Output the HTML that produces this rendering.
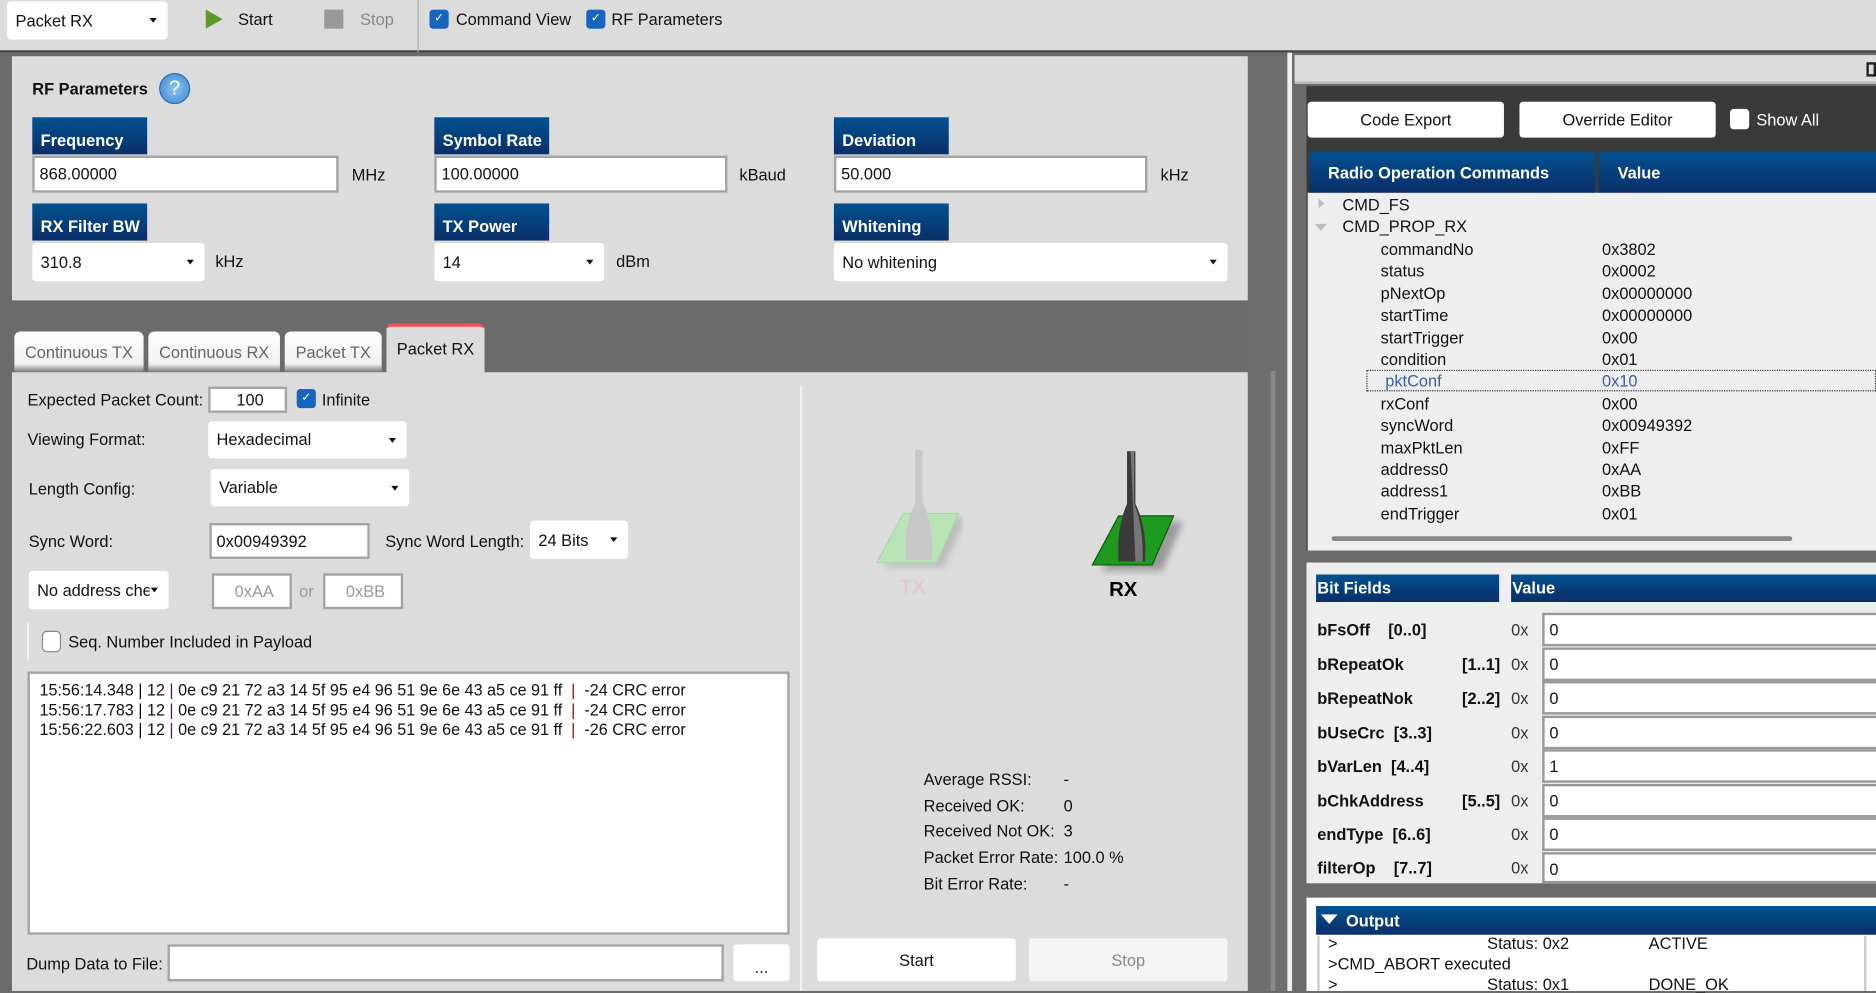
<!DOCTYPE html>
<html><head><meta charset="utf-8"><style>
*{box-sizing:border-box;margin:0;padding:0}
html,body{width:1876px;height:991px;overflow:hidden;background:#6b6b6b}
#w{position:absolute;left:0;top:0;width:1568px;height:828px;transform:scale(1.19643,1.19686);transform-origin:0 0;font-family:"Liberation Sans",sans-serif;font-size:13.7px;color:#111}
.a{position:absolute}
.bh{position:absolute;background:linear-gradient(#00518f,#0b2f68);color:#fff;font-weight:bold;font-size:13.7px;padding-left:7px;display:flex;align-items:center}
.inp{position:absolute;background:#fff;border:2px solid #a3a3a3;padding-left:4px;display:flex;align-items:center}
.dd{position:absolute;background:#fff;border-radius:3px;padding-left:7px;display:flex;align-items:center}
.dd:after{content:"";position:absolute;right:9px;top:50%;margin-top:-2px;border:3px solid transparent;border-top:4px solid #111}
.cb{position:absolute;width:16px;height:16px;border-radius:3px;background:#1565c0;color:#fff;font-size:10px;text-align:center;line-height:16px}
.cbe{position:absolute;width:16px;height:18px;border-radius:4px;background:#fff;border:1px solid #888}
.btn{position:absolute;background:#fff;border-radius:3px;display:flex;align-items:center;justify-content:center}
.tab{position:absolute;top:277px;height:34px;background:linear-gradient(#fff,#f0f0f0 80%,#777);border-radius:5px 5px 0 0;color:#666;display:flex;align-items:center;justify-content:center}
.row{position:absolute;left:1154px}
.val{position:absolute;left:1339px}
.bf{position:absolute;left:1101px;font-weight:bold}
.bx{position:absolute;left:1263px;color:#333}
.bi{position:absolute;left:1289px;width:290px;height:28px;background:#fff;border:2px solid #999;border-right:none;padding-left:4px;line-height:25px}
</style></head><body><div id="w">
<div class="a" style="left:0;top:0;width:1568px;height:44px;background:#dcdcdc;border-bottom:2px solid #444"></div>
<div class="dd" style="left:6px;top:1px;width:134px;height:32px">Packet RX</div>
<svg class="a" style="left:171px;top:7px" width="16" height="18"><polygon points="1,1 15,9 1,17" fill="#5a9a2a"/></svg>
<div class="a" style="left:199px;top:9px">Start</div>
<div class="a" style="left:271px;top:8px;width:16px;height:16px;background:#999"></div>
<div class="a" style="left:301px;top:9px;color:#888">Stop</div>
<div class="a" style="left:349px;top:0;width:1px;height:44px;background:#aaa"></div>
<div class="cb" style="left:359px;top:8px">✓</div><div class="a" style="left:381px;top:9px">Command View</div>
<div class="cb" style="left:490px;top:8px">✓</div><div class="a" style="left:511px;top:9px">RF Parameters</div>
<div class="a" style="left:10px;top:47px;width:1033px;height:204px;background:#dcdcdc"></div>
<div class="a" style="left:27px;top:67px;font-weight:bold">RF Parameters</div>
<div class="a" style="left:133px;top:61px;width:26px;height:26px;border-radius:50%;background:radial-gradient(#8ec4f0,#3a87d2);border:1px solid #2a6cb0;color:#fff;text-align:center;line-height:24px;font-size:17px">?</div>
<div class="bh" style="left:27px;top:98px;width:96px;height:31px;padding-top:8px">Frequency</div>
<div class="inp" style="left:27px;top:130px;width:256px;height:31px">868.00000</div>
<div class="a" style="left:294px;top:139px">MHz</div>
<div class="bh" style="left:363px;top:98px;width:96px;height:31px;padding-top:8px">Symbol Rate</div>
<div class="inp" style="left:363px;top:130px;width:245px;height:31px">100.00000</div>
<div class="a" style="left:618px;top:139px">kBaud</div>
<div class="bh" style="left:697px;top:98px;width:96px;height:31px;padding-top:8px">Deviation</div>
<div class="inp" style="left:697px;top:130px;width:262px;height:31px">50.000</div>
<div class="a" style="left:970px;top:139px">kHz</div>
<div class="bh" style="left:27px;top:170px;width:96px;height:31px;padding-top:8px">RX Filter BW</div>
<div class="dd" style="left:27px;top:203px;width:144px;height:32px">310.8</div>
<div class="a" style="left:180px;top:211px">kHz</div>
<div class="bh" style="left:363px;top:170px;width:96px;height:31px;padding-top:8px">TX Power</div>
<div class="dd" style="left:363px;top:203px;width:142px;height:32px">14</div>
<div class="a" style="left:515px;top:211px">dBm</div>
<div class="bh" style="left:697px;top:170px;width:96px;height:31px;padding-top:8px">Whitening</div>
<div class="dd" style="left:697px;top:203px;width:329px;height:32px">No whitening</div>
<div class="tab" style="left:12px;width:108px">Continuous TX</div>
<div class="tab" style="left:124px;width:110px">Continuous RX</div>
<div class="tab" style="left:238px;width:81px">Packet TX</div>
<div class="a" style="left:323px;top:270px;width:82px;height:42px;background:#dcdcdc;border-top:3px solid #f05050;border-radius:5px 5px 0 0;text-align:center;padding-top:11px">Packet RX</div>
<div class="a" style="left:10px;top:311px;width:1033px;height:517px;background:#dcdcdc"></div>
<div class="a" style="left:669px;top:322px;width:1px;height:506px;background:#fff"></div>
<div class="a" style="left:23px;top:327px">Expected Packet Count:</div>
<div class="inp" style="left:174px;top:323px;width:66px;height:22px;justify-content:center">100</div>
<div class="cb" style="left:248px;top:325px">✓</div><div class="a" style="left:269px;top:327px">Infinite</div>
<div class="a" style="left:23px;top:360px">Viewing Format:</div>
<div class="dd" style="left:174px;top:352px;width:166px;height:31px">Hexadecimal</div>
<div class="a" style="left:24px;top:401px">Length Config:</div>
<div class="dd" style="left:176px;top:392px;width:166px;height:31px">Variable</div>
<div class="a" style="left:24px;top:445px">Sync Word:</div>
<div class="inp" style="left:175px;top:437px;width:134px;height:30px">0x00949392</div>
<div class="a" style="left:322px;top:445px">Sync Word Length:</div>
<div class="dd" style="left:443px;top:435px;width:82px;height:32px">24 Bits</div>
<div class="dd" style="left:24px;top:477px;width:117px;height:32px;white-space:nowrap;overflow:hidden"><span style="display:inline-block;width:94px;overflow:hidden">No address check</span></div>
<div class="inp" style="left:177px;top:479px;width:67px;height:30px;justify-content:center;color:#999">0xAA</div>
<div class="a" style="left:250px;top:487px;color:#999">or</div>
<div class="inp" style="left:270px;top:479px;width:67px;height:30px;justify-content:center;color:#999">0xBB</div>
<div class="a" style="left:23px;top:520px;width:1px;height:32px;background:#fff"></div>
<div class="cbe" style="left:35px;top:527px"></div>
<div class="a" style="left:57px;top:529px">Seq. Number Included in Payload</div>
<div class="a" style="left:23px;top:561px;width:637px;height:220px;background:#fff;border:2px solid #a3a3a3;padding:6px 0 0 8px;font-size:13.5px;line-height:16.5px;white-space:pre">15:56:14.348 | 12 <span style="color:#609">|</span> 0e c9 21 72 a3 14 5f 95 e4 96 51 9e 6e 43 a5 ce 91 ff  <span style="color:#a00">|</span>  -24 CRC error
15:56:17.783 | 12 <span style="color:#609">|</span> 0e c9 21 72 a3 14 5f 95 e4 96 51 9e 6e 43 a5 ce 91 ff  <span style="color:#a00">|</span>  -24 CRC error
15:56:22.603 | 12 <span style="color:#609">|</span> 0e c9 21 72 a3 14 5f 95 e4 96 51 9e 6e 43 a5 ce 91 ff  <span style="color:#a00">|</span>  -26 CRC error</div>
<div class="a" style="left:22px;top:798px">Dump Data to File:</div>
<div class="inp" style="left:140px;top:789px;width:465px;height:31px"></div>
<div class="btn" style="left:613px;top:789px;width:47px;height:31px;padding-top:8px">...</div>
<svg class="a" style="left:725px;top:372px" width="80" height="125">
<defs><filter id="s"><feGaussianBlur stdDeviation="3"/></filter></defs>
<polygon points="30,57 76,57 58,98 8,98" fill="#bdbdbd" filter="url(#s)" transform="translate(6,4)"/>
<polygon points="30,57 76,57 58,98 8,98" fill="#b8e4b8" stroke="#a8d8a8"/>
<path d="M40,4 h6 v44 q10,20 8,48 h-22 q-2,-28 8,-48z" fill="#c8c8c8"/>
<text x="27" y="124" font-family="Liberation Sans" font-weight="bold" font-size="17" fill="#e0cccc">TX</text></svg>
<svg class="a" style="left:905px;top:374px" width="90" height="130">
<polygon points="30,57 76,57 58,98 8,98" fill="#9a9a9a" filter="url(#s)" transform="translate(8,5)"/>
<polygon points="30,57 76,57 58,98 8,98" fill="#1e9a1e" stroke="#0b5a0b"/>
<path d="M37,3 h7 v44 q10,20 8,48 h-22 q-2,-28 7,-48z" fill="#3a3a3a"/>
<path d="M40,3 h3 v44 q8,20 7,48 h-6z" fill="#777"/>
<text x="22" y="124" font-family="Liberation Sans" font-weight="bold" font-size="17" fill="#000">RX</text></svg>
<div class="a" style="left:772px;top:641px;line-height:21.7px">Average RSSI:<br>Received OK:<br>Received Not OK:<br>Packet Error Rate:<br>Bit Error Rate:</div>
<div class="a" style="left:889px;top:641px;line-height:21.7px">-<br>0<br>3<br>100.0 %<br>-</div>
<div class="btn" style="left:683px;top:784px;width:166px;height:36px">Start</div>
<div class="btn" style="left:860px;top:784px;width:166px;height:36px;background:#f4f4f4;color:#888">Stop</div>
<div class="a" style="left:1043px;top:47px;width:35px;height:781px;background:#6e6e6e"></div>
<div class="a" style="left:1062px;top:310px;width:4px;height:518px;background:#888"></div>
<div class="a" style="left:1076px;top:44px;width:4px;height:784px;background:#f0f0f0"></div>
<div class="a" style="left:1080px;top:44px;width:488px;height:784px;background:#6b6b6b"></div>
<div class="a" style="left:1082px;top:46px;width:486px;height:24px;background:#dcdcdc;border-bottom:2px solid #bbb"></div>
<div class="a" style="left:1560px;top:52px;width:8px;height:12px;border:2px solid #222"></div>
<div class="a" style="left:1092px;top:72px;width:476px;height:388px;background:#3a3a3a"></div>
<div class="btn" style="left:1093px;top:85px;width:164px;height:30px">Code Export</div>
<div class="btn" style="left:1270px;top:85px;width:164px;height:30px">Override Editor</div>
<div class="a" style="left:1446px;top:91px;width:16px;height:17px;background:#fff;border-radius:3px"></div>
<div class="a" style="left:1468px;top:93px;color:#fff">Show All</div>
<div class="a" style="left:1093px;top:161px;width:475px;height:299px;background:#eeeeee"></div>
<div class="bh" style="left:1094px;top:127px;width:239px;height:34px;padding-left:16px">Radio Operation Commands</div>
<div class="bh" style="left:1336px;top:127px;width:232px;height:34px;padding-left:16px">Value</div>
<div class="a" style="left:1102px;top:166px;border:4px solid transparent;border-left:5px solid #bbb"></div>
<div class="a" style="left:1099px;top:187px;border:5px solid transparent;border-top:6px solid #bbb"></div>
<div class="a" style="left:1122px;top:164px">CMD_FS</div>
<div class="a" style="left:1122px;top:182px">CMD_PROP_RX</div>
<div class="row" style="top:200px;line-height:18.4px">commandNo<br>status<br>pNextOp<br>startTime<br>startTrigger<br>condition<br><span style="color:#4060a0">&nbsp;pktConf</span><br>rxConf<br>syncWord<br>maxPktLen<br>address0<br>address1<br>endTrigger</div>
<div class="val" style="top:200px;line-height:18.4px">0x3802<br>0x0002<br>0x00000000<br>0x00000000<br>0x00<br>0x01<br><span style="color:#4060a0">0x10</span><br>0x00<br>0x00949392<br>0xFF<br>0xAA<br>0xBB<br>0x01</div>
<div class="a" style="left:1142px;top:309px;width:426px;height:18px;border:1px dotted #333"></div>
<div class="a" style="left:1113px;top:448px;width:385px;height:4px;background:#888;border-radius:2px"></div>
<div class="a" style="left:1092px;top:470px;width:476px;height:268px;background:#eeeeee"></div>
<div class="bh" style="left:1100px;top:480px;width:153px;height:23px;padding-left:1px">Bit Fields</div>
<div class="bh" style="left:1263px;top:480px;width:305px;height:23px;padding-left:1px">Value</div>
<div class="bf" style="top:519px">bFsOff&nbsp;&nbsp;&nbsp;&nbsp;[0..0]</div>
<div class="bf" style="top:548px">bRepeatOk<span class="a" style="left:121px">[1..1]</span></div>
<div class="bf" style="top:576px">bRepeatNok<span class="a" style="left:121px">[2..2]</span></div>
<div class="bf" style="top:605px">bUseCrc&nbsp;&nbsp;[3..3]</div>
<div class="bf" style="top:633px">bVarLen&nbsp;&nbsp;[4..4]</div>
<div class="bf" style="top:662px">bChkAddress<span class="a" style="left:121px">[5..5]</span></div>
<div class="bf" style="top:690px">endType&nbsp;&nbsp;[6..6]</div>
<div class="bf" style="top:718px">filterOp&nbsp;&nbsp;&nbsp;&nbsp;[7..7]</div>
<div class="bx" style="top:519px">0x</div><div class="bi" style="top:512px">0</div>
<div class="bx" style="top:548px">0x</div><div class="bi" style="top:541px">0</div>
<div class="bx" style="top:576px">0x</div><div class="bi" style="top:569px">0</div>
<div class="bx" style="top:605px">0x</div><div class="bi" style="top:598px">0</div>
<div class="bx" style="top:633px">0x</div><div class="bi" style="top:626px">1</div>
<div class="bx" style="top:662px">0x</div><div class="bi" style="top:655px">0</div>
<div class="bx" style="top:690px">0x</div><div class="bi" style="top:683px">0</div>
<div class="bx" style="top:718px">0x</div><div class="bi" style="top:712px;height:26px">0</div>
<div class="a" style="left:1092px;top:750px;width:476px;height:78px;background:#fff"></div>
<div class="bh" style="left:1100px;top:757px;width:468px;height:24px;padding-left:25px">Output</div>
<div class="a" style="left:1104px;top:764px;border:6px solid transparent;border-top:8px solid #fff;border-left-width:7px;border-right-width:7px"></div>
<div class="a" style="left:1101px;top:782px;width:2px;height:46px;background:#ccc"></div>
<div class="a" style="left:1558px;top:782px;width:2px;height:46px;background:#ccc"></div>
<div class="a" style="left:1110px;top:781px">&gt;</div><div class="a" style="left:1243px;top:781px">Status: 0x2</div><div class="a" style="left:1378px;top:781px">ACTIVE</div>
<div class="a" style="left:1110px;top:798px">&gt;CMD_ABORT executed</div>
<div class="a" style="left:1110px;top:815px">&gt;</div><div class="a" style="left:1243px;top:815px">Status: 0x1</div><div class="a" style="left:1378px;top:815px">DONE_OK</div>
</div></body></html>
